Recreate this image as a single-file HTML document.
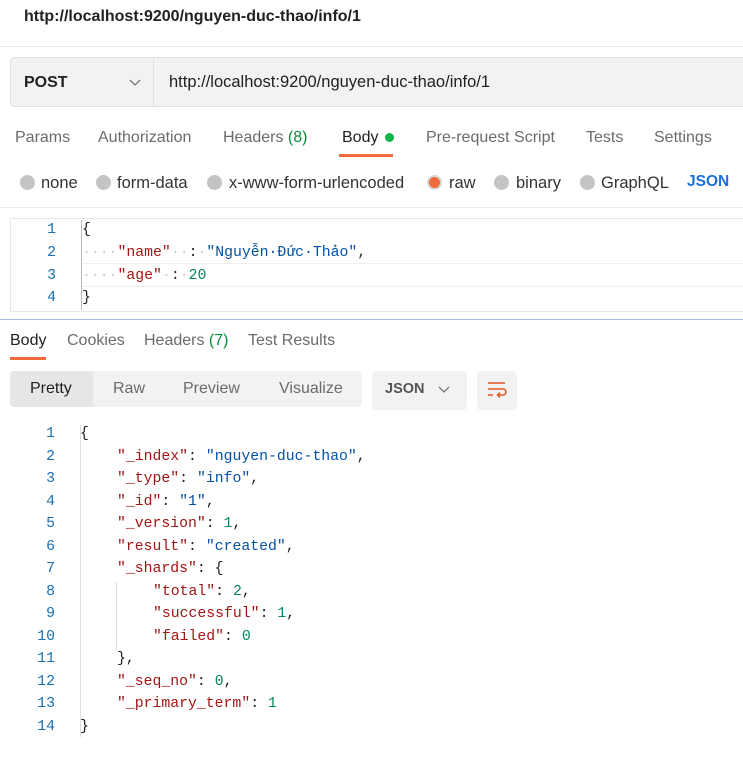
<!DOCTYPE html>
<html><head><meta charset="utf-8"><style>
*{margin:0;padding:0;box-sizing:border-box}
body{width:743px;height:758px;background:#fff;font-family:"Liberation Sans",sans-serif;color:#212121;position:relative;overflow:hidden}
.a{position:absolute;white-space:nowrap}
.t{font-size:16px;color:#6b6b6b}
.r{font-size:16.5px;color:#333}
.mono{font-family:"Liberation Mono","DejaVu Sans Mono",monospace;font-size:14.8px}
.ln{position:absolute;width:30px;text-align:right;color:#1a6fb0;font-family:"Liberation Mono",monospace;font-size:14.8px}
.k{color:#a31515}.s{color:#0451a5}.n{color:#098658}
.radio{position:absolute;width:15px;height:15px;border-radius:50%;background:#c4c4c4}
</style></head><body>
<div class="a" style="left:24px;top:8px;font-size:16px;font-weight:bold;color:#212121">http://localhost:9200/nguyen-duc-thao/info/1</div>
<div class="a" style="left:0;top:46px;width:743px;height:1px;background:#ebebeb"></div>
<div class="a" style="left:10px;top:57px;width:740px;height:50px;background:#f2f2f2;border:1px solid #e2e2e2;border-radius:4px"></div>
<div class="a" style="left:153px;top:58px;width:1px;height:48px;background:#e0e0e0"></div>
<div class="a" style="left:24px;top:74px;font-size:16px;font-weight:bold">POST</div>
<svg class="a" style="left:129px;top:79px" width="12" height="8"><path d="M1 1l5 5 5-5" fill="none" stroke="#777" stroke-width="1.3"/></svg>
<div class="a" style="left:169px;top:73px;font-size:16.5px;color:#212121">http://localhost:9200/nguyen-duc-thao/info/1</div>

<div class="a t" style="left:15px;top:129px">Params</div>
<div class="a t" style="left:98px;top:129px">Authorization</div>
<div class="a t" style="left:223px;top:129px">Headers <span style="color:#0a8a3a">(8)</span></div>
<div class="a t" style="left:342px;top:129px;color:#212121">Body</div>
<div class="a" style="left:385px;top:133px;width:9px;height:9px;border-radius:50%;background:#0cb84a"></div>
<div class="a" style="left:339px;top:154px;width:54px;height:3px;background:#f26b3a"></div>
<div class="a t" style="left:426px;top:129px">Pre-request Script</div>
<div class="a t" style="left:586px;top:129px">Tests</div>
<div class="a t" style="left:654px;top:129px">Settings</div>

<div class="radio" style="left:20px;top:175px"></div><div class="a r" style="left:41px;top:174px">none</div>
<div class="radio" style="left:96px;top:175px"></div><div class="a r" style="left:117px;top:174px">form-data</div>
<div class="radio" style="left:207px;top:175px"></div><div class="a r" style="left:229px;top:174px">x-www-form-urlencoded</div>
<div class="radio" style="left:427px;top:175px;background:#f26b3a;border:2px solid #d8d8d8"></div><div class="a r" style="left:449px;top:174px">raw</div>
<div class="radio" style="left:494px;top:175px"></div><div class="a r" style="left:516px;top:174px">binary</div>
<div class="radio" style="left:580px;top:175px"></div><div class="a r" style="left:601px;top:174px">GraphQL</div>
<div class="a" style="left:687px;top:173px;font-size:15.5px;font-weight:bold;color:#1a6fd8">JSON</div>
<div class="a" style="left:0;top:207px;width:743px;height:1px;background:#ebebeb"></div>

<div class="a" style="left:10px;top:218px;width:740px;height:94px;border:1px solid #e6e6e6;border-right:none"></div>
<div class="a" style="left:82px;top:263px;width:670px;height:24px;border-top:1px solid #eee;border-bottom:1px solid #eee"></div>
<div class="ln" style="left:26px;top:222px">1</div>
<div class="ln" style="left:26px;top:245px">2</div>
<div class="ln" style="left:26px;top:268px">3</div>
<div class="ln" style="left:26px;top:290px">4</div>
<div class="a" style="left:81px;top:220px;width:1px;height:90px;background:#bbb"></div>
<div class="a mono" style="left:82px;top:222px">{</div>
<div class="a mono" style="left:82px;top:245px"><span style="color:#ccc">····</span><span class="k">"name"</span><span style="color:#ccc">··</span>:<span style="color:#ccc">·</span><span class="s">"Nguyễn·Đức·Thảo"</span>,</div>
<div class="a mono" style="left:82px;top:268px"><span style="color:#ccc">····</span><span class="k">"age"</span><span style="color:#ccc">·</span>:<span style="color:#ccc">·</span><span class="n">20</span></div>
<div class="a mono" style="left:82px;top:290px">}</div>
<div class="a" style="left:0;top:319px;width:743px;height:1px;background:#9dbde0"></div>

<div class="a t" style="left:10px;top:332px;color:#212121">Body</div>
<div class="a" style="left:10px;top:357px;width:36px;height:3px;background:#f26b3a"></div>
<div class="a t" style="left:67px;top:332px">Cookies</div>
<div class="a t" style="left:144px;top:332px">Headers <span style="color:#0a8a3a">(7)</span></div>
<div class="a t" style="left:248px;top:332px">Test Results</div>

<div class="a" style="left:10px;top:371px;width:352px;height:36px;background:#f2f2f2;border-radius:4px"></div>
<div class="a" style="left:10px;top:371px;width:83px;height:36px;background:#e6e6e6;border-radius:4px 0 0 4px"></div>
<div class="a t" style="left:30px;top:380px;color:#212121">Pretty</div>
<div class="a t" style="left:113px;top:380px">Raw</div>
<div class="a t" style="left:183px;top:380px">Preview</div>
<div class="a t" style="left:279px;top:380px">Visualize</div>
<div class="a" style="left:372px;top:371px;width:95px;height:39px;background:#f2f2f2;border-radius:4px"></div>
<div class="a" style="left:385px;top:381px;font-size:14.5px;font-weight:bold;color:#555">JSON</div>
<svg class="a" style="left:438px;top:386px" width="12" height="8"><path d="M1 1l5 5 5-5" fill="none" stroke="#777" stroke-width="1.3"/></svg>
<div class="a" style="left:477px;top:371px;width:40px;height:39px;background:#f2f2f2;border-radius:4px"></div>
<svg class="a" style="left:486px;top:380px" width="22" height="20"><path d="M2 3h17M2 9h15a3 3 0 0 1 0 6h-5M14 12.5l-2.5 2.5 2.5 2.5M2 15h5" fill="none" stroke="#e0531f" stroke-width="1.4"/></svg>

<div class="a" style="left:80px;top:425px;width:1px;height:312px;background:#ddd"></div>
<div class="a" style="left:116px;top:582px;width:1px;height:69px;background:#ddd"></div>
<div class="ln" style="left:25px;top:426px">1</div><div class="a mono" style="left:80px;top:426px">{</div>
<div class="ln" style="left:25px;top:449px">2</div><div class="a mono" style="left:117px;top:449px"><span class="k">"_index"</span>: <span class="s">"nguyen-duc-thao"</span>,</div>
<div class="ln" style="left:25px;top:471px">3</div><div class="a mono" style="left:117px;top:471px"><span class="k">"_type"</span>: <span class="s">"info"</span>,</div>
<div class="ln" style="left:25px;top:494px">4</div><div class="a mono" style="left:117px;top:494px"><span class="k">"_id"</span>: <span class="s">"1"</span>,</div>
<div class="ln" style="left:25px;top:516px">5</div><div class="a mono" style="left:117px;top:516px"><span class="k">"_version"</span>: <span class="n">1</span>,</div>
<div class="ln" style="left:25px;top:539px">6</div><div class="a mono" style="left:117px;top:539px"><span class="k">"result"</span>: <span class="s">"created"</span>,</div>
<div class="ln" style="left:25px;top:561px">7</div><div class="a mono" style="left:117px;top:561px"><span class="k">"_shards"</span>: {</div>
<div class="ln" style="left:25px;top:584px">8</div><div class="a mono" style="left:153px;top:584px"><span class="k">"total"</span>: <span class="n">2</span>,</div>
<div class="ln" style="left:25px;top:606px">9</div><div class="a mono" style="left:153px;top:606px"><span class="k">"successful"</span>: <span class="n">1</span>,</div>
<div class="ln" style="left:25px;top:629px">10</div><div class="a mono" style="left:153px;top:629px"><span class="k">"failed"</span>: <span class="n">0</span></div>
<div class="ln" style="left:25px;top:651px">11</div><div class="a mono" style="left:117px;top:651px">},</div>
<div class="ln" style="left:25px;top:674px">12</div><div class="a mono" style="left:117px;top:674px"><span class="k">"_seq_no"</span>: <span class="n">0</span>,</div>
<div class="ln" style="left:25px;top:696px">13</div><div class="a mono" style="left:117px;top:696px"><span class="k">"_primary_term"</span>: <span class="n">1</span></div>
<div class="ln" style="left:25px;top:719px">14</div><div class="a mono" style="left:80px;top:719px">}</div>
</body></html>
